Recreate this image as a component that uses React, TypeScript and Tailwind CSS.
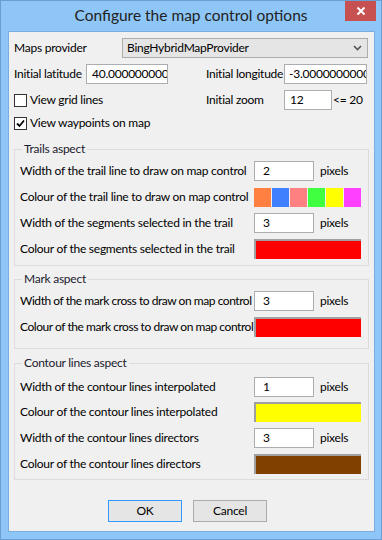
import React from "react";

const font = { fontFamily: 'Lato, "Noto Sans", sans-serif' };

function TextBox({ value, className }: { value: string; className: string }) {
  return (
    <div
      className={`h-[20px] shrink-0 overflow-hidden whitespace-nowrap border border-[#abadb3] bg-white pl-[4px] leading-[18px] ${className}`}
    >
      {value}
    </div>
  );
}

function Check({ checked, label }: { checked?: boolean; label: string }) {
  return (
    <div className="flex items-center gap-[3px] whitespace-nowrap">
      <div className="flex h-[13px] w-[13px] items-center justify-center border border-[#333] bg-white">
        {checked && (
          <svg width="9" height="9" viewBox="0 0 9 9">
            <path d="M1 4.5 L3.5 7 L8 1.5" fill="none" stroke="#000" strokeWidth="1.8" />
          </svg>
        )}
      </div>
      <span>{label}</span>
    </div>
  );
}

function Group({ title, children, className }: { title: string; children: React.ReactNode; className: string }) {
  return (
    <div className={`relative mx-[5px] border border-[#dcdcdc] px-[5px] ${className}`}>
      <div className="absolute left-[7px] top-[-10px] bg-[#f0f0f0] px-[2px] leading-[18px] text-[#1a1a2e]">
        {title}
      </div>
      {children}
    </div>
  );
}

function WidthRow({ label, value, className, tight }: { label: string; value: string; className: string; tight?: boolean }) {
  return (
    <div className={`flex h-[20px] items-center ${className}`}>
      <span className={`w-[234px] shrink-0 whitespace-nowrap ${tight ? "tracking-[-0.45px]" : ""}`}>{label}</span>
      <TextBox value={value} className="w-[60px] pl-[8px]" />
      <span className="ml-[6px]">pixels</span>
    </div>
  );
}

function ColourRow({ label, color, className, tight }: { label: string; color: string; className: string; tight?: boolean }) {
  return (
    <div className={`flex h-[20px] items-center ${className}`}>
      <span className={`w-[234px] shrink-0 whitespace-nowrap ${tight ? "tracking-[-0.45px]" : ""}`}>{label}</span>
      <div
        className="h-[20px] w-[107px] border-l-2 border-t-2 border-[#a0a0a0]"
        style={{ backgroundColor: color }}
      />
    </div>
  );
}

export default function App() {
  const swatches = ["#ff8040", "#4080ff", "#ff8080", "#40ff40", "#ffff00", "#ff40ff"];
  return (
    <div
      className="flex h-[540px] w-[382px] flex-col border border-[#6b9fd4] bg-[#8ec6f7] text-[12px] tracking-[-0.25px] text-black"
      style={font}
    >
      {/* title bar */}
      <div className="relative flex h-[30px] shrink-0 items-center justify-center">
        <span className="text-[15.5px] tracking-normal text-[#222]">Configure the map control options</span>
        <div className="absolute right-[5px] top-0 flex h-[20px] w-[31px] items-center justify-center bg-[#c75050]">
          <svg width="10" height="10" viewBox="0 0 10 10">
            <path d="M1.5 1.5 L8.5 8.5 M8.5 1.5 L1.5 8.5" stroke="#fff" strokeWidth="2" />
          </svg>
        </div>
      </div>

      {/* client */}
      <div className="ml-[7px] mr-[6px] flex h-[501px] flex-col border border-[#7aaee0] bg-[#f0f0f0] pt-[6px]">
        <div className="flex h-[20px] items-center px-[5px]">
          <span className="w-[108px] shrink-0">Maps provider</span>
          <div className="flex h-[20px] w-[246px] items-center justify-between border border-[#acacac] bg-[#e5e5e5] pl-[4px] pr-[5px]">
            <span>BingHybridMapProvider</span>
            <svg width="9" height="6" viewBox="0 0 9 6">
              <path d="M1 1 L4.5 4.5 L8 1" fill="none" stroke="#555" strokeWidth="1.6" />
            </svg>
          </div>
        </div>

        <div className="mt-[6px] flex h-[20px] items-center whitespace-nowrap px-[5px]">
          <span className="w-[72px] shrink-0">Initial latitude</span>
          <TextBox value="40.0000000000" className="w-[82px] pl-[5px]" />
          <span className="ml-[38px] w-[78px] shrink-0">Initial longitude</span>
          <TextBox value="-3.0000000000" className="w-[83px] pl-[4px]" />
        </div>

        <div className="mt-[6px] flex h-[20px] items-center whitespace-nowrap px-[5px]">
          <div className="w-[192px] shrink-0">
            <Check label="View grid lines" />
          </div>
          <span className="w-[78px] shrink-0">Initial zoom</span>
          <TextBox value="12" className="w-[48px] pl-[5px]" />
          <span className="ml-[1px]">&lt;= 20</span>
        </div>

        <div className="mt-[5px] flex h-[16px] items-center px-[5px]">
          <Check checked label="View waypoints on map" />
        </div>

        <Group title="Trails aspect" className="mt-[18px] h-[117px] pt-[11px]">
          <WidthRow label="Width of the trail line to draw on map control" value="2" className="" />
          <div className="mt-[6px] flex h-[20px] items-center">
            <span className="w-[234px] shrink-0 whitespace-nowrap">Colour of the trail line to draw on map control</span>
            <div className="flex gap-[1px]">
              {swatches.map((c) => (
                <div key={c} className="h-[19px] w-[17px]" style={{ backgroundColor: c }} />
              ))}
            </div>
          </div>
          <WidthRow label="Width of the segments selected in the trail" value="3" className="mt-[6px]" />
          <ColourRow label="Colour of the segments selected in the trail" color="#ff0000" className="mt-[6px]" />
        </Group>

        <Group title="Mark aspect" className="mt-[13px] h-[70px] pt-[11px]">
          <WidthRow label="Width of the mark cross to draw on map control" value="3" className="" tight />
          <ColourRow label="Colour of the mark cross to draw on map control" color="#ff0000" className="mt-[6px]" tight />
        </Group>

        <Group title="Contour lines aspect" className="mt-[14px] h-[117px] pt-[13px]">
          <WidthRow label="Width of the contour lines interpolated" value="1" className="" />
          <ColourRow label="Colour of the contour lines interpolated" color="#ffff00" className="mt-[5px]" />
          <WidthRow label="Width of the contour lines directors" value="3" className="mt-[6px]" />
          <ColourRow label="Colour of the contour lines directors" color="#804000" className="mt-[6px]" />
        </Group>

        <div className="mt-[20px] flex justify-center gap-[11px] pr-[8px]">
          <button className="h-[22px] w-[74px] border border-[#3399ff] bg-[#e5e5e5]">OK</button>
          <button className="h-[22px] w-[74px] border border-[#acacac] bg-[#e5e5e5]">Cancel</button>
        </div>
      </div>
    </div>
  );
}
